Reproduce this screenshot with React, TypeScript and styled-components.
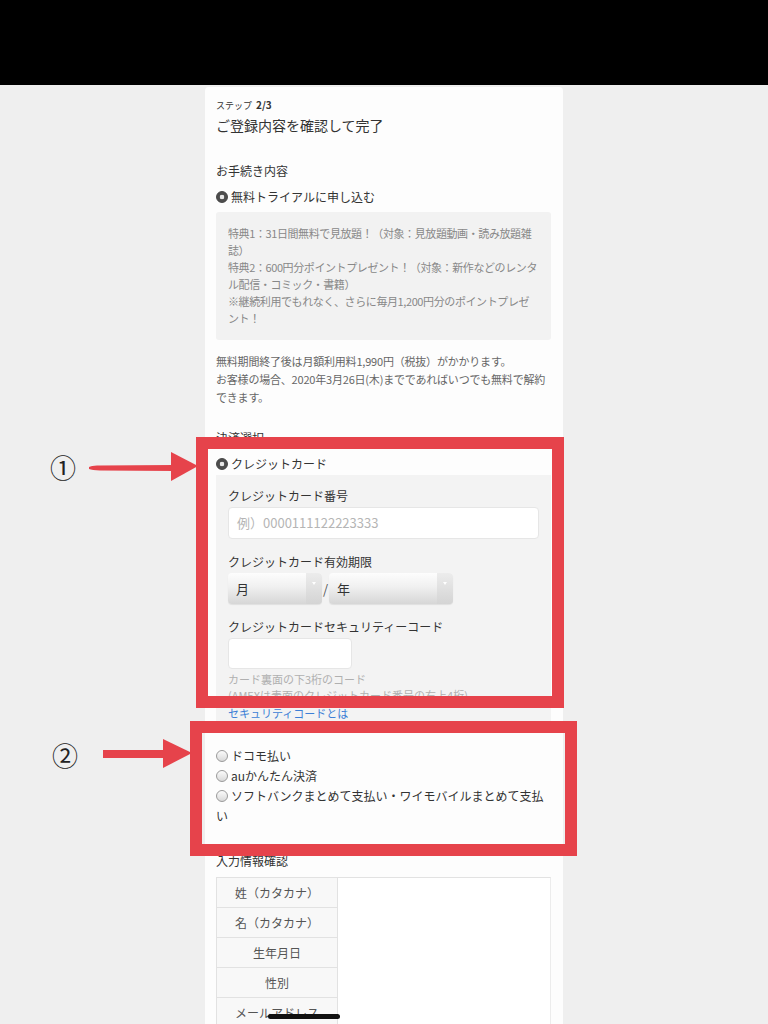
import React from "react";
import styled, { createGlobalStyle } from "styled-components";

const GlobalStyle = createGlobalStyle`
  html, body {
    margin: 0;
    padding: 0;
    background: #efefef;
  }
  body {
    font-family: "Noto Sans CJK JP", "Noto Sans", sans-serif;
    color: #333;
  }
`;

const StPage = styled.div`
  position: relative;
  width: 768px;
  min-height: 1024px;
  background: #efefef;
  overflow: hidden;
`;

const StTopBar = styled.div`
  height: 85px;
  background: #000;
`;

const StCard = styled.div`
  width: 358px;
  box-sizing: border-box;
  margin: 2px auto 0;
  padding: 11px 12px 0 11px;
  background: #fdfdfd;
  border-radius: 4px 4px 0 0;
`;

const StStep = styled.div`
  font-size: 9px;
  line-height: 14px;
  color: #333;
  b {
    font-size: 10px;
    margin-left: 4px;
  }
`;

const StTitle = styled.h1`
  margin: 1px 0 0;
  font-size: 14px;
  line-height: 22px;
  font-weight: normal;
  color: #333;
`;

const StSectionLabel = styled.div<{ $gap: number }>`
  margin-top: ${(p) => p.$gap}px;
  font-size: 12px;
  line-height: 18px;
  color: #333;
`;

const StRadioLine = styled.div<{ $gap?: number; $tall?: boolean }>`
  margin-top: ${(p) => p.$gap ?? 0}px;
  font-size: 12px;
  line-height: ${(p) => (p.$tall ? 20 : 18)}px;
  color: #333;
`;

const StRadio = styled.span<{ $checked?: boolean }>`
  display: inline-block;
  box-sizing: border-box;
  width: 12px;
  height: 12px;
  margin-right: 3px;
  border-radius: 50%;
  vertical-align: -1px;
  background: ${(p) =>
    p.$checked
      ? "radial-gradient(circle, #e8e8e8 0 2px, #4d4d4d 2.6px)"
      : "linear-gradient(#fbfbfb, #d9d9d9)"};
  border: 1px solid ${(p) => (p.$checked ? "#444" : "#9a9a9a")};
`;

const StInfoBox = styled.div`
  margin-top: 6px;
  padding: 13px 12px;
  background: #f2f2f2;
  border-radius: 3px;
  font-size: 11px;
  letter-spacing: -0.4px;
  line-height: 17px;
  color: #888;
`;

const StNotice = styled.p`
  margin: 12px 0 0;
  font-size: 11px;
  letter-spacing: -0.2px;
  line-height: 18px;
  color: #666;
`;

const StPanel = styled.div`
  margin-top: 2px;
  padding: 12px 12px 2px;
  background: #f3f3f3;
`;

const StFieldLabel = styled.div<{ $gap?: number }>`
  margin-top: ${(p) => p.$gap ?? 0}px;
  font-size: 12px;
  line-height: 18px;
  color: #333;
`;

const StInput = styled.div<{ $width?: number }>`
  box-sizing: border-box;
  margin-top: 2px;
  width: ${(p) => (p.$width ? `${p.$width}px` : "100%")};
  height: ${(p) => (p.$width ? 31 : 32)}px;
  padding: 0 8px;
  background: #fff;
  border: 1px solid #e6e6e6;
  border-radius: 4px;
  font-size: 13px;
  line-height: 30px;
  color: #b5b5b5;
`;

const StSelectRow = styled.div`
  margin-top: 2px;
  display: flex;
  align-items: center;
  height: 31px;
`;

const StSelect = styled.div<{ $width: number }>`
  position: relative;
  box-sizing: border-box;
  width: ${(p) => p.$width}px;
  height: 31px;
  padding-left: 8px;
  border-radius: 4px;
  background: linear-gradient(#fdfdfd, #f0f0f0 45%, #d6d6d6);
  box-shadow: 0 1px 1px rgba(0, 0, 0, 0.08);
  font-size: 13px;
  line-height: 31px;
  color: #333;
  &::after {
    content: "";
    position: absolute;
    right: 0;
    top: 0;
    bottom: 0;
    width: 16px;
    border-radius: 0 4px 4px 0;
    background: linear-gradient(#ececec, #d4d4d4);
  }
  &::before {
    content: "";
    position: absolute;
    right: 6px;
    top: 9px;
    z-index: 1;
    border-left: 2px solid transparent;
    border-right: 2px solid transparent;
    border-top: 3px solid #fff;
  }
`;

const StSlash = styled.span`
  width: 7px;
  text-align: center;
  font-size: 13px;
  color: #555;
`;

const StHelp = styled.div`
  margin-top: 2px;
  font-size: 11px;
  line-height: 16px;
  color: #b0b0b0;
`;

const StLink = styled.a`
  display: block;
  margin-top: 2px;
  font-size: 11px;
  line-height: 16px;
  color: #3d7fd6;
  text-decoration: none;
`;

const StRadioGroup = styled.div`
  margin-top: 23px;
`;

const StTable = styled.div`
  margin-top: 7px;
  display: grid;
  grid-template-columns: 121px 1fr;
  border-top: 1px solid #e2e2e2;
  border-left: 1px solid #e2e2e2;
  border-right: 1px solid #ececec;
`;

const StTh = styled.div`
  height: 30px;
  box-sizing: border-box;
  border-bottom: 1px solid #e2e2e2;
  border-right: 1px solid #e2e2e2;
  background: #f8f8f8;
  font-size: 12px;
  line-height: 29px;
  text-align: center;
  color: #555;
`;

const StTd = styled.div`
  height: 30px;
  background: #fff;
`;

const StRedBox = styled.div<{ $l: number; $t: number; $w: number; $h: number }>`
  position: absolute;
  left: ${(p) => p.$l}px;
  top: ${(p) => p.$t}px;
  width: ${(p) => p.$w}px;
  height: ${(p) => p.$h}px;
  box-sizing: border-box;
  border: 12px solid #e6434b;
`;

const StMarker = styled.div<{ $l: number; $t: number }>`
  position: absolute;
  left: ${(p) => p.$l}px;
  top: ${(p) => p.$t}px;
  font-family: "Noto Sans CJK JP", sans-serif;
  font-size: 26px;
  line-height: 30px;
  color: #222;
`;

const StArrow = styled.svg`
  position: absolute;
  left: 0;
  top: 0;
  pointer-events: none;
`;

const StHomeBar = styled.div`
  position: absolute;
  left: 268px;
  top: 1014px;
  width: 72px;
  height: 5px;
  border-radius: 3px;
  background: #111;
`;

const tableRows = ["姓（カタカナ）", "名（カタカナ）", "生年月日", "性別", "メールアドレス"];

export default function App() {
  return (
    <StPage>
      <GlobalStyle />
      <StTopBar />
      <StCard>
        <StStep>
          ステップ<b>2/3</b>
        </StStep>
        <StTitle>ご登録内容を確認して完了</StTitle>

        <StSectionLabel $gap={26}>お手続き内容</StSectionLabel>
        <StRadioLine $gap={8}>
          <StRadio $checked />
          無料トライアルに申し込む
        </StRadioLine>
        <StInfoBox>
          特典1：31日間無料で見放題！（対象：見放題動画・読み放題雑誌）
          <br />
          特典2：600円分ポイントプレゼント！（対象：新作などのレンタル配信・コミック・書籍）
          <br />
          ※継続利用でもれなく、さらに毎月1,200円分のポイントプレゼント！
        </StInfoBox>
        <StNotice>
          無料期間終了後は月額利用料1,990円（税抜）がかかります。
          <br />
          お客様の場合、2020年3月26日(木)までであればいつでも無料で解約できます。
        </StNotice>

        <StSectionLabel $gap={23}>決済選択</StSectionLabel>
        <StRadioLine $gap={8}>
          <StRadio $checked />
          クレジットカード
        </StRadioLine>
        <StPanel>
          <StFieldLabel>クレジットカード番号</StFieldLabel>
          <StInput>例）0000111122223333</StInput>
          <StFieldLabel $gap={14}>クレジットカード有効期限</StFieldLabel>
          <StSelectRow>
            <StSelect $width={94}>月</StSelect>
            <StSlash>/</StSlash>
            <StSelect $width={124}>年</StSelect>
          </StSelectRow>
          <StFieldLabel $gap={14}>クレジットカードセキュリティーコード</StFieldLabel>
          <StInput $width={124} />
          <StHelp>
            カード裏面の下3桁のコード
            <br />
            (AMEXは表面のクレジットカード番号の右上4桁)
          </StHelp>
          <StLink href="#">セキュリティコードとは</StLink>
        </StPanel>

        <StRadioGroup>
          <StRadioLine $tall>
            <StRadio />
            ドコモ払い
          </StRadioLine>
          <StRadioLine $tall>
            <StRadio />
            auかんたん決済
          </StRadioLine>
          <StRadioLine $tall>
            <StRadio />
            ソフトバンクまとめて支払い・ワイモバイルまとめて支払い
          </StRadioLine>
        </StRadioGroup>

        <StSectionLabel $gap={26}>入力情報確認</StSectionLabel>
        <StTable>
          {tableRows.map((r) => (
            <React.Fragment key={r}>
              <StTh>{r}</StTh>
              <StTd />
            </React.Fragment>
          ))}
        </StTable>
      </StCard>

      <StRedBox $l={196} $t={437} $w={368} $h={271} />
      <StRedBox $l={190} $t={721} $w={387} $h={135} />

      <StMarker $l={50} $t={452}>①</StMarker>
      <StMarker $l={52} $t={740}>②</StMarker>

      <StArrow width="768" height="1024" viewBox="0 0 768 1024">
        <path d="M89 467 Q92 465 100 465.5 L174 465 L174 471 L100 470.5 Q92 470 89 469 Z" fill="#e6434b" />
        <polygon points="171,452 198,466 171,481" fill="#e6434b" />
        <rect x="103" y="750" width="62" height="8" fill="#e6434b" />
        <polygon points="163,739 192,753 163,768" fill="#e6434b" />
      </StArrow>

      <StHomeBar />
    </StPage>
  );
}
